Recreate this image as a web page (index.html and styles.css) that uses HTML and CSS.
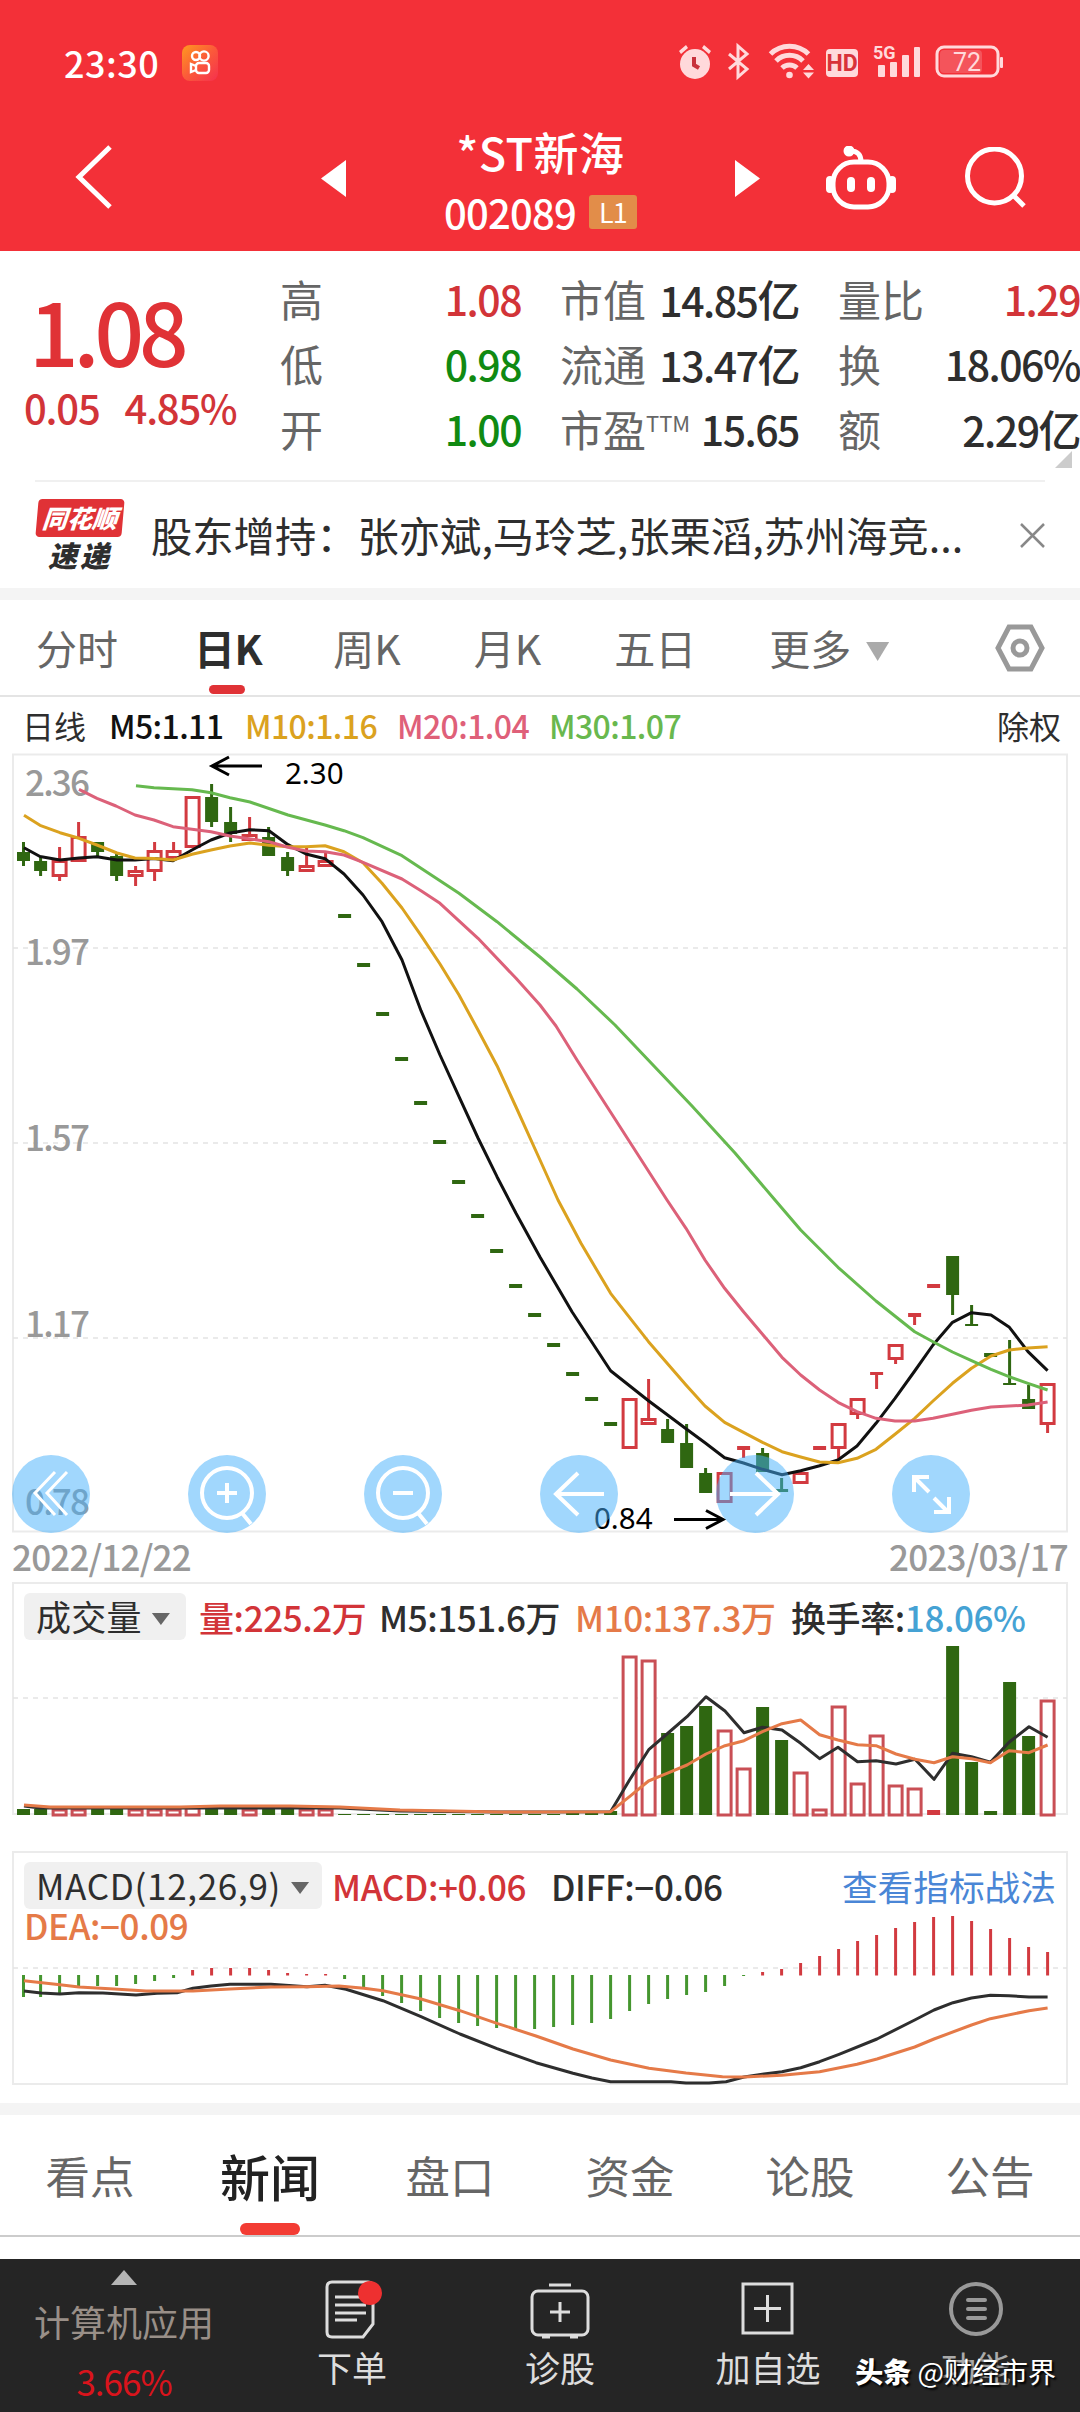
FILE: index.html
```html
<!DOCTYPE html>
<html lang="zh-CN">
<head>
  <meta charset="UTF-8" />
  <meta name="viewport" content="width=device-width, initial-scale=1.0" />
  <title>*ST新海 002089</title>
  <link rel="stylesheet" href="styles.css">
</head>
<body>
  <header class="header">
    <div class="status-bar">
      <span class="clock">23:30</span>
      <svg class="app-icon" width="36" height="36" viewBox="0 0 36 36">
        <defs>
          <linearGradient id="appGradient" x1="0" y1="0" x2="1" y2="1">
            <stop offset="0" stop-color="#ff9a1f" />
            <stop offset="0.5" stop-color="#fb5a3a" />
            <stop offset="1" stop-color="#f5304e" />
          </linearGradient>
        </defs>
        <rect width="36" height="36" rx="8" fill="url(#appGradient)" />
        <g fill="none" stroke="#fff" stroke-width="2.4">
          <circle cx="14" cy="11" r="4" />
          <circle cx="22" cy="11" r="4.6" />
          <rect x="14" y="18" width="13" height="10" rx="3" />
          <path d="M14 21l-5-2v8l5-2" />
        </g>
      </svg>
      <svg class="status-icons" width="330" height="44" viewBox="0 -4 330 44">
        <g fill="#ffd9db">
          <circle cx="17" cy="19" r="15" />
          <path d="M1 6l7-6 2 3-7 6zM33 6l-7-6-2 3 7 6z" />
          <circle cx="111.500" cy="30" r="3.300" />
          <path d="M125 25l5.500-6 5.500 6zM125 27.500l5.500 6 5.500-6z" />
          <rect x="148" y="4" width="32" height="28" rx="4" />
          <rect x="200" y="20" width="7" height="12" rx="1" />
          <rect x="212" y="17" width="7" height="15" rx="1" />
          <rect x="224" y="10" width="7" height="22" rx="1" />
          <rect x="236" y="2" width="6" height="30" rx="1" />
          <rect x="322" y="12" width="3" height="11" rx="1" />
        </g>
        <path d="M16 12v8l5 3" fill="none" stroke="#c8323c" stroke-width="4" />
        <g fill="none" stroke="#ffd9db" stroke-width="3">
          <path d="M51 9l18 15-9 8V1l9 8-18 15" />
          <path d="M92.500 9a27 27 0 0 1 38 0M98 16a19 19 0 0 1 27 0M104 23a11 11 0 0 1 15 0" stroke-width="5" />
          <rect x="259" y="2" width="61" height="29" rx="7" />
        </g>
        <rect x="262" y="5" width="42" height="23" rx="4" fill="#f4545b" />
        <text class="hd" x="164" y="26">HD</text>
        <text class="five-g" x="195" y="14">5G</text>
        <text class="battery" x="289" y="25.500">72</text>
      </svg>
    </div>
    <div class="title-bar">
      <svg class="back" width="38" height="66" viewBox="0 0 38 66"><path d="M35 2L4 32l31 30" /></svg>
      <svg class="prev" width="25" height="37" viewBox="0 0 25 37"><path d="M25 0v37L0 18.500z" /></svg>
      <div class="stock">
        <div class="stock-name">*ST新海</div>
        <div class="stock-code">002089 <span class="level">L1</span></div>
      </div>
      <svg class="next" width="25" height="37" viewBox="0 0 25 37"><path d="M0 0v37L25 18.500z" /></svg>
      <svg class="robot" width="70" height="64" viewBox="0 0 70 64">
        <rect x="7" y="16" width="56" height="45" rx="21" />
        <path d="M24 5c8 0 11 4 11 11" />
        <circle cx="23" cy="5" r="3" />
        <path d="M4 34v9M66 34v9M25 35v7M45 35v7" class="thick" />
      </svg>
      <svg class="search" width="62" height="62" viewBox="0 0 62 62">
        <circle cx="29.500" cy="29" r="27" />
        <path d="M48 48l11 11" />
      </svg>
    </div>
  </header>

  <section class="quote">
    <div class="price">
      <div class="price-now">1.08</div>
      <div class="price-change"><span>0.05</span><span>4.85%</span></div>
    </div>
    <div class="stats">
      <div class="stat"><label>高</label><b class="up">1.08</b></div>
      <div class="stat"><label>市值</label><b>14.85<i>亿</i></b></div>
      <div class="stat"><label>量比</label><b class="up">1.29</b></div>
      <div class="stat"><label>低</label><b class="down">0.98</b></div>
      <div class="stat"><label>流通</label><b>13.47<i>亿</i></b></div>
      <div class="stat"><label>换</label><b>18.06%</b></div>
      <div class="stat"><label>开</label><b class="down">1.00</b></div>
      <div class="stat"><label>市盈<sup>TTM</sup></label><b>15.65</b></div>
      <div class="stat"><label>额</label><b>2.29<i>亿</i></b></div>
    </div>
    <span class="expand"></span>
  </section>

  <section class="flash">
    <div class="flash-logo">
      <span class="logo-top">同花顺</span>
      <span class="logo-bottom">速递</span>
    </div>
    <p class="flash-text">股东增持：<span>张亦斌,马玲芝,张栗滔,苏州海竞...</span></p>
    <svg class="close" width="25" height="25" viewBox="0 0 25 25"><path d="M1 1l23 23M24 1L1 24" /></svg>
  </section>

  <nav class="periods">
    <a>分时</a>
    <a class="active">日K</a>
    <a>周K</a>
    <a>月K</a>
    <a>五日</a>
    <a class="more">更多<i class="caret"></i></a>
    <svg class="settings" width="50" height="48" viewBox="0 0 50 48">
      <path d="M14 3h22l11 21-11 21H14L3 24z" />
      <circle cx="25" cy="24" r="7" />
    </svg>
  </nav>

  <div class="ma-legend">
    <span class="ma-name">日线</span>
    <span class="m5">M5:1.11</span>
    <span class="m10">M10:1.16</span>
    <span class="m20">M20:1.04</span>
    <span class="m30">M30:1.07</span>
    <span class="adjust">除权</span>
  </div>

  <section class="k-chart">
    <svg width="1080" height="784" viewBox="0 752 1080 784">
      <path class="frame" d="M13 754.500H1067V1531.500H13z" />
      <path class="grid" d="M13 948H1067M13 1143H1067M13 1338H1067" />
      <g class="axis">
        <text x="25" y="796">2.36</text>
        <text x="25" y="965">1.97</text>
        <text x="25" y="1151">1.57</text>
        <text x="25" y="1337">1.17</text>
        <text x="25" y="1515">0.78</text>
      </g>
      <g id="candles"></g>
      <polyline class="line m5" points="24,847.700 40,856.500 60,860 79,858 97,856.700 117,860 135,860 154,858.500 173,860.700 192,850 211,840 230,833 250,829.700 269,830.700 288,844.700 306,854 325,858.700 344,874 363,895 382,921.700 402,960 421,1010.700 440,1055 459,1096.700 478,1138 497,1176.700 516,1213.300 540,1257 572,1311.700 610.600,1370.700 648.500,1400.700 686,1428.700 705,1442.700 724.600,1457.700 743.500,1463 762.500,1469.300 782,1474.700 800.700,1470.700 819.600,1465.700 838,1460 857,1446 876,1423.300 895,1398.300 914.700,1371 933,1345 952.500,1322.300 971.500,1312.700 991,1315 1009.400,1327.300 1028,1351.700 1047.600,1370.700" />
      <polyline class="line m10" points="24,815.300 40,825.300 60,832.700 79,838.300 97,845 117,853 135,858 154,858.500 173,860 192,854.300 211,850 230,846 250,843 269,845.300 288,846.700 306,846.700 325,845.700 344,851.700 363,862.700 382,883.300 402,908 421,935.300 440,964 459,995 478,1030 497,1065.700 516,1107 540,1160 558,1200 581,1243.300 610.600,1293.300 648.500,1341.700 686,1385 705,1406 724.600,1422.300 743.500,1432.300 762.500,1442.300 782,1451.700 800.700,1457 819.600,1462 838,1462.700 857,1458.300 876,1449.300 895,1434.300 914.700,1418.300 933,1401 952.500,1383.300 971.500,1368.300 991,1356 1009.400,1350 1028,1348 1047.600,1346.700" />
      <polyline class="line m20" points="79,789.300 97,798.300 116,806 135,815 154,820 173,826.700 211,831.700 230,836 269,841.700 288,847.300 306,851 325,851.700 344,855 363,862.300 402,879 421,890.700 440,903.300 478,938.300 516,978.300 540,1005 556,1026 577,1060 615,1119 667,1200 686,1228.300 705,1260 724.600,1288.300 743.500,1311.700 762.500,1334.300 782,1357.300 800.700,1375 819.600,1390 838,1402.300 857,1411.700 876,1418.300 895,1421 914.700,1421 933,1418.300 952.500,1414.300 971.500,1410.300 991,1407 1009,1406 1028,1405 1047.600,1402" />
      <polyline class="line m30" points="136,785.700 154,787.700 192,789.700 211,792.700 230,797.700 250,802 288,815 325,825 344,830.700 363,837.700 402,855.700 459,893.300 497,921.700 540,957 577,989 615,1025 653,1065 692,1106 735,1153 775,1200 800.700,1230 838,1267.300 876,1301 914.700,1331.700 933,1341.700 952.500,1352 971.500,1360.700 991,1369.300 1009,1376.700 1028,1383.300 1047.600,1390" />
      <g class="mark">
        <path d="M262 766H213M229 757L212 766l17 9" />
        <text x="285" y="784">2.30</text>
        <path d="M674 1519.500h48M706 1510.500l17 9-17 9" />
        <text x="594" y="1529">0.84</text>
      </g>
    </svg>
    <div class="tools">
      <svg viewBox="0 0 78 78"><path d="M43 17L23 38l20 22M55 17L35 38l20 22" class="thin" /></svg>
      <svg viewBox="0 0 78 78"><circle cx="39" cy="38" r="25" /><path d="M39 28v20M29 38h20M54 58l9 11" /></svg>
      <svg viewBox="0 0 78 78"><circle cx="39" cy="38" r="25" /><path d="M29 38h20M54 58l9 11" /></svg>
      <svg viewBox="0 0 78 78"><path d="M64 39H17M38 18L16 39l22 21" /></svg>
      <svg viewBox="0 0 78 78"><path d="M14 39h47M40 18l22 21-22 21" /></svg>
      <svg viewBox="0 0 78 78"><path d="M37 22H22v15M22 22l15 15M42 43l14 14M57 42v15H42" /></svg>
    </div>
  </section>

  <div class="dates"><span>2022/12/22</span><span>2023/03/17</span></div>

  <section class="panel volume">
    <svg width="1080" height="236" viewBox="0 1582 1080 236">
      <path class="frame" d="M13 1583H1067V1814H13z" />
      <path class="grid" d="M13 1698H1067" />
      <g id="volumes"></g>
      <polyline class="line diff" points="24,1806 40,1808 340,1808 400,1811 500,1812 610.600,1811.700 629.500,1780 649,1749.300 667,1734 687,1716.700 706,1696.700 725,1711 744,1732.700 762.500,1727.300 782,1730 800.700,1743.300 819.600,1758.700 838,1747.300 857.500,1761.700 876,1760.700 896,1764 915,1759.300 934,1779.300 952.500,1753.300 971.500,1756.700 990.400,1762.300 1009,1742.300 1029,1726.700 1047.600,1737.300" />
      <polyline class="line dea" points="24,1805 50,1807 180,1807 220,1806 290,1806 340,1807 400,1810 500,1812 610.600,1811.700 629.500,1796.700 648.500,1781 667,1773.300 687,1765 706,1754 725,1745.700 744,1740.700 762.500,1731.700 782,1723.700 800.700,1720 819.600,1734.700 838,1740 857.500,1744.700 876,1745.700 896,1754 915,1759.300 934,1762.700 952.500,1756.700 971.500,1758.700 990.400,1762.700 1009,1750.700 1029,1752.700 1047.600,1745" />
    </svg>
    <div class="legend">
      <span class="chip">成交量<i class="caret"></i></span>
      <span class="up v1">量:225.2万</span>
      <span class="v2">M5:151.6万</span>
      <span class="orange v3">M10:137.3万</span>
      <span class="v4">换手率:<em>18.06%</em></span>
    </div>
  </section>

  <section class="panel macd">
    <svg width="1080" height="236" viewBox="0 1851 1080 236">
      <path class="frame" d="M13 1852H1067V2084H13z" />
      <path class="grid" d="M13 1968H1067" />
      <g id="macdBars"></g>
      <polyline class="line diff" points="24,1991 41,1993 60,1994 79,1992.700 103,1993 136,1995 157,1993.300 177,1992.700 193,1988.300 211,1986 230,1984.300 271,1984.300 307,1986.700 325,1985.300 346,1989.300 383,2000.700 421,2016.700 460,2034 497,2048.700 536,2062.700 573,2073.300 592,2078 610.600,2081.700 671,2081.700 686,2083 709,2083 726,2081.700 744,2077 764,2074 782,2071.700 800.700,2067.700 819.600,2061.700 839,2054.300 877,2039 914.700,2020 934,2010 953,2002.700 971.500,1998 990.400,1995.300 1009,1995.700 1029,1997 1047.600,1997" />
      <polyline class="line dea" points="24,1980.700 60,1984.700 79,1987 114,1989 146,1991 193,1991 230,1989 271,1987 307,1986.700 339,1986 364,1988.300 383,1990.700 421,1999 460,2010.700 497,2023.300 536,2036 573,2049 610.600,2060 649,2068.300 686,2073 722.500,2076.700 744,2077 782,2075.300 819.600,2071.700 857,2064.300 877,2059 914.700,2047 934,2039 971.500,2025 990.400,2018.700 1029,2010.700 1047.600,2008" />
    </svg>
    <div class="legend">
      <span class="chip">MACD(12,26,9)<i class="caret"></i></span>
      <span class="up c1">MACD:+0.06</span>
      <span class="c2">DIFF:−0.06</span>
      <a class="guide">查看指标战法</a>
    </div>
    <div class="dea-value orange">DEA:−0.09</div>
  </section>

  <nav class="sections">
    <a>看点</a>
    <a class="active">新闻</a>
    <a>盘口</a>
    <a>资金</a>
    <a>论股</a>
    <a>公告</a>
  </nav>

  <footer class="bottom-bar">
    <div class="industry">
      <i class="caret-up"></i>
      <span>计算机应用</span>
      <strong>3.66%</strong>
    </div>
    <div class="action">
      <svg width="60" height="60" viewBox="0 0 60 60">
        <path d="M10 2h36q5 0 5 5v37L41 57H10q-5 0-5-5V7q0-5 5-5z" />
        <path d="M13 17h27M13 25h31M13 33h31M13 40h22" />
        <circle cx="48" cy="13" r="12" class="dot" />
      </svg>
      <span>下单</span>
    </div>
    <div class="action">
      <svg width="60" height="60" viewBox="0 0 60 60">
        <path d="M19 5h22" />
        <rect x="2" y="11" width="56" height="44" rx="6" />
        <path d="M30 22v20M20 32h20M12 57h8M40 57h8" />
      </svg>
      <span>诊股</span>
    </div>
    <div class="action">
      <svg width="60" height="60" viewBox="0 0 60 60">
        <rect x="5" y="4" width="49" height="49" />
        <path d="M29.500 15v27M16 28.500h27" />
      </svg>
      <span>加自选</span>
    </div>
    <div class="action menu">
      <svg width="60" height="60" viewBox="0 0 60 60">
        <circle cx="30" cy="29" r="25" />
        <path d="M22 20h17M22 29h17M22 38h17" class="bars" />
      </svg>
      <span>功能</span>
    </div>
    <div class="watermark"><b>头条</b> @财经市界</div>
  </footer>

  <script src="script.js"></script>
</body>
</html>
```

FILE: styles.css
```css
* {
  box-sizing: border-box;
}
body {
  margin: 0;
  width: 1080px;
  height: 2412px;
  overflow: hidden;
  background: #fff;
  color: #2e2e2e;
  font-family: "Noto Sans CJK SC", "Noto Sans", sans-serif;
}
svg {
  display: block;
}
i, em {
  font-style: normal;
}
.up {
  color: #d23438;
}
.down {
  color: #108a12;
}
.orange {
  color: #e57a48;
}

/* Header */
.header {
  height: 251px;
  background: #f33038;
  color: #fff;
}
.status-bar {
  display: flex;
  align-items: center;
  height: 126px;
  padding: 0 74px 0 64px;
}
.clock {
  font-size: 36px;
  font-weight: 500;
  letter-spacing: 0.5px;
  width: 118px;
  margin-top: -3px;
}
.status-icons {
  margin-left: auto;
  margin-right: -2px;
}
.hd {
  font: bold 23px Roboto, sans-serif;
  fill: #d8323a;
  text-anchor: middle;
}
.five-g {
  font: bold 18px Roboto, sans-serif;
  fill: #ffd9db;
}
.battery {
  font: 25px Roboto, sans-serif;
  fill: #ffd9db;
  text-anchor: middle;
}
.title-bar {
  display: flex;
  align-items: center;
  height: 104px;
  padding-left: 75px;
}
.back, .search, .robot {
  fill: none;
  stroke: #fff;
  stroke-width: 5;
  flex: none;
}
.robot .thick {
  stroke-width: 8;
  stroke-linecap: round;
}
.robot circle {
  fill: #fff;
}
.prev, .next {
  fill: #fff;
  flex: none;
}
.prev {
  margin-left: 208px;
}
.stock {
  width: 389px;
  padding-top: 5px;
  text-align: center;
}
.stock-name {
  font-size: 45px;
  font-weight: 500;
  line-height: 56px;
  letter-spacing: 0.5px;
}
.stock-code {
  display: flex;
  justify-content: center;
  align-items: center;
  gap: 13px;
  font-size: 40px;
  font-weight: 500;
  line-height: 50px;
  padding-top: 7px;
  letter-spacing: -0.8px;
}
.level {
  width: 48px;
  height: 34px;
  border-radius: 3px;
  background: #e28d49;
  font-size: 27px;
  font-weight: 400;
  line-height: 33px;
}
.robot {
  margin-left: 66px;
}
.search {
  margin-left: 69px;
}

/* Quote */
.quote {
  position: relative;
  display: flex;
  height: 229px;
  padding-top: 14px;
}
.price {
  width: 280px;
  padding-left: 24px;
}
.price-now {
  font-size: 87px;
  font-weight: 500;
  line-height: 100px;
  margin-top: 14px;
  padding-left: 5px;
  letter-spacing: -5px;
  color: #e03236;
}
.price-change {
  display: flex;
  gap: 25px;
  font-size: 40px;
  font-weight: 500;
  line-height: 44px;
  margin-top: 6px;
  letter-spacing: -1.2px;
  color: #d23438;
}
.stats {
  display: grid;
  grid-template-columns: 241px 239px 242px;
  grid-auto-rows: 65px;
  column-gap: 39px;
}
.stat {
  display: flex;
  justify-content: space-between;
  align-items: center;
  white-space: nowrap;
}
.stat label {
  font-size: 43px;
  color: #666;
}
.stat sup {
  font-size: 22px;
  line-height: 0;
}
.stat b {
  font-size: 41px;
  font-weight: 500;
  letter-spacing: -1.5px;
}
.stat i {
  font-size: 43px;
}
.expand {
  position: absolute;
  right: 8px;
  bottom: 12px;
  width: 17px;
  height: 17px;
  background: #ccc;
  clip-path: polygon(100% 0, 100% 100%, 0 100%);
}

/* News flash */
.flash {
  display: flex;
  align-items: center;
  height: 108px;
  margin: 0 35px;
  border-top: 2px solid #f0f0f0;
}
.flash-logo {
  width: 90px;
  text-align: center;
  font-style: italic;
  font-weight: 900;
  line-height: 1;
}
.logo-top {
  display: block;
  height: 38px;
  margin: 0 2px;
  line-height: 36px;
  font-size: 25px;
  border-radius: 4px;
  background: #e03236;
  color: #fff;
  transform: skewX(-5deg);
}
.logo-bottom {
  display: block;
  font-size: 29px;
  line-height: 34px;
  letter-spacing: 3px;
}
.flash-text {
  margin: -3px 0 0 26px;
  font-size: 41.3px;
  line-height: 60px;
  white-space: nowrap;
}
.close {
  margin-left: auto;
  stroke: #888;
  stroke-width: 2.5;
}

/* Period tabs */
.periods {
  display: flex;
  align-items: center;
  height: 109px;
  padding: 0 35px 0 36px;
  border-top: 12px solid #f4f4f4;
  border-bottom: 2px solid #e4e4e4;
  font-size: 41px;
  color: #666;
}
.periods a {
  position: relative;
  margin-right: 73px;
  line-height: 93px;
}
.periods .active {
  margin-left: 3px;
  margin-right: 71px;
  font-weight: 700;
  letter-spacing: -0.5px;
  color: #2e2e2e;
}
.periods .active::after,
.sections .active::after {
  content: "";
  position: absolute;
  left: 50%;
  bottom: 0;
  width: 36px;
  height: 9px;
  margin-left: -19px;
  border-radius: 5px;
  background: #e03236;
}
.caret {
  display: inline-block;
  width: 18px;
  height: 12px;
  margin-left: 9px;
  background: #666;
  clip-path: polygon(0 0, 100% 0, 50% 100%);
}
.more .caret {
  width: 23px;
  height: 19px;
  margin-left: 15px;
  margin-bottom: 4px;
  background: #aaa;
}
.settings {
  margin-left: auto;
  fill: none;
  stroke: #999;
  stroke-width: 5;
}
.periods .more {
  margin-right: 0;
}

/* Moving average row */
.ma-legend {
  display: flex;
  align-items: center;
  height: 55px;
  padding: 0 19px 0 22px;
  font-size: 32px;
  line-height: 50px;
  white-space: nowrap;
}
.ma-legend span {
  font-weight: 500;
  letter-spacing: -0.6px;
}
.ma-legend .ma-name, .ma-legend .adjust {
  font-weight: 400;
  letter-spacing: 0;
}
.ma-name { width: 87px; }
.ma-legend .m5 { width: 136px; color: #111; }
.ma-legend .m10 { width: 152px; color: #dba21f; }
.ma-legend .m20 { width: 152px; color: #df6079; }
.ma-legend .m30 { color: #69b84e; }
.adjust {
  margin-left: auto;
}

/* Candles */
.k-chart {
  position: relative;
}
.frame {
  fill: none;
  stroke: #ebebeb;
  stroke-width: 2;
}
.grid {
  stroke: #e3e3e3;
  stroke-width: 1.5;
  stroke-dasharray: 5 5;
}
.axis text {
  font-size: 35px;
  font-weight: 500;
  letter-spacing: -1.8px;
  fill: #999;
}
.line {
  fill: none;
  stroke-width: 3;
  stroke-linejoin: round;
}
.line.m5 { stroke: #111; }
.line.m10 { stroke: #dba21f; }
.line.m20 { stroke: #dc6179; }
.line.m30 { stroke: #66b94f; }
.line.diff { stroke: #2e2e2e; }
.line.dea { stroke: #e57a48; }
.mark path {
  fill: none;
  stroke: #000;
  stroke-width: 3;
}
.mark text {
  font: 29.5px "Noto Sans", sans-serif;
}
.green-fill { fill: #2f6711; }
.red-fill { fill: #d23a40; }
.macd-green { fill: #45962f; }
.red-box {
  fill: #fff;
  stroke: #d23a40;
  stroke-width: 3;
}
.volume-box {
  stroke: #c94f55;
}
.tools {
  position: absolute;
  left: 12px;
  bottom: 3px;
  display: flex;
  gap: 98px;
}
.tools svg {
  width: 78px;
  height: 78px;
  border-radius: 50%;
  background: rgba(68, 176, 252, 0.5);
  fill: none;
  stroke: #fff;
  stroke-width: 4;
}
.tools .thin {
  stroke-width: 3;
}
.dates {
  display: flex;
  justify-content: space-between;
  height: 46px;
  padding: 0 12px;
  font-size: 35px;
  font-weight: 500;
  line-height: 39px;
  letter-spacing: -0.8px;
  color: #999;
}

/* Volume and MACD */
.panel {
  position: relative;
  height: 269px;
  padding: 11px 24px 0;
  font-size: 35px;
}
.panel > svg {
  position: absolute;
  left: 0;
  top: 0;
}
.legend {
  position: relative;
  display: flex;
  align-items: center;
  height: 47px;
  font-weight: 500;
  letter-spacing: -0.4px;
  line-height: 46px;
  white-space: nowrap;
}
.chip {
  width: 162px;
  height: 47px;
  padding-left: 12px;
  border-radius: 6px;
  background: #f0f0f0;
  font-weight: 400;
  letter-spacing: 0.3px;
}
.chip .caret {
  margin-left: 10px;
  margin-bottom: 6px;
}
.v1 { width: 180px; margin-left: 13px; }
.v2 { width: 196px; }
.v3 { width: 216px; }
.v4 em { color: #45a2d4; }
.macd {
  height: 252px;
}
.macd .chip {
  width: 298px;
  letter-spacing: 0.7px;
}
.c1 { width: 219px; margin-left: 10px; }
.guide {
  margin-left: auto;
  font-size: 35.7px;
  font-weight: 400;
  letter-spacing: 0;
  color: #4a86d6;
}
.dea-value {
  position: relative;
  font-weight: 500;
  letter-spacing: -0.4px;
  line-height: 38px;
  margin-top: -3px;
}

/* Section tabs */
.sections {
  display: flex;
  height: 134px;
  border-top: 12px solid #f4f4f4;
  border-bottom: 2px solid #ccc;
  font-size: 44.5px;
  color: #666;
}
.sections a {
  position: relative;
  flex: 1;
  line-height: 120px;
  text-align: center;
}
.sections .active {
  font-size: 50px;
  font-weight: 500;
  color: #222;
}
.sections .active::after {
  width: 60px;
  height: 12px;
  margin-left: -30px;
  border-radius: 6px;
  background: #f33c34;
}

/* Bottom bar */
.bottom-bar {
  position: relative;
  display: flex;
  height: 153px;
  margin-top: 22px;
  background: #252525;
  color: #ddd;
  font-size: 35px;
}
.industry {
  display: flex;
  flex-direction: column;
  align-items: center;
  width: 248px;
  padding-top: 11px;
  color: #998f88;
}
.caret-up {
  width: 26px;
  height: 15px;
  background: #b5b5b5;
  clip-path: polygon(50% 0, 100% 100%, 0 100%);
}
.industry span {
  font-size: 36px;
  line-height: 50px;
  margin-top: 11px;
}
.industry strong {
  font-weight: 400;
  line-height: 44px;
  margin-top: 13px;
  letter-spacing: -1px;
  color: #d9141c;
}
.action {
  display: flex;
  flex-direction: column;
  align-items: center;
  width: 208px;
  padding-top: 21px;
}
.action svg {
  fill: none;
  stroke: #ddd;
  stroke-width: 3;
}
.action .dot {
  fill: #ee3030;
  stroke: none;
}
.action span {
  line-height: 50px;
  margin-top: 2px;
}
.menu svg {
  stroke: #999;
  stroke-width: 4;
}
.menu .bars {
  stroke-width: 4;
  stroke-linecap: round;
}
.menu span {
  color: #aaa;
}
.watermark {
  position: absolute;
  right: 24px;
  top: 87px;
  font-size: 28px;
  line-height: 50px;
  color: #fff;
  text-shadow: 2px 2px 2px #000;
  white-space: nowrap;
}
.watermark b {
  font-weight: 900;
}
```

FILE: script.js
```js
var SVG = 'http://www.w3.org/2000/svg';

// Centre of the n-th trading day
function dayX(n) {
  return n === 0 ? 23.5 : 21.6 + n * 19;
}

function rect(parent, cls, x, y, w, h) {
  var el = document.createElementNS(SVG, 'rect');
  el.setAttribute('class', cls);
  el.setAttribute('x', x);
  el.setAttribute('y', y);
  el.setAttribute('width', w);
  el.setAttribute('height', h);
  parent.appendChild(el);
}

// [colour, body top, body bottom, wick top, wick bottom]
var candles = [
  ['g', 852, 861, 842, 866], ['g', 861, 871, 857, 876], ['r', 860, 877, 847, 881],
  ['r', 836, 862, 822, 862], ['g', 842, 852, 842, 856], ['g', 856, 876, 852, 881],
  ['r', 870, 877, 866, 886], ['r', 850, 872, 842, 881], ['r', 850, 859, 842, 859],
  ['r', 796, 848, 796, 848], ['g', 797, 822, 784, 827], ['g', 822, 834, 807, 842],
  ['r', 834, 841, 817, 841], ['g', 837, 856, 827, 856], ['g', 857, 871, 852, 876],
  ['r', 865, 872, 848, 872], ['r', 860, 867, 852, 867],
  ['g', 914, 918], ['g', 963, 967], ['g', 1012, 1016], ['g', 1057, 1061],
  ['g', 1101, 1105], ['g', 1140, 1144], ['g', 1180, 1184], ['g', 1214, 1218],
  ['g', 1249, 1253], ['g', 1284, 1288], ['g', 1313, 1317], ['g', 1343, 1347],
  ['g', 1372, 1376], ['g', 1397, 1401], ['g', 1422, 1426],
  ['r', 1398, 1449, 1398, 1449], ['r', 1418, 1425, 1379, 1425], ['g', 1429, 1443, 1419, 1443],
  ['g', 1443, 1468, 1424, 1468], ['g', 1473, 1493, 1468, 1493], ['r', 1472, 1503, 1472, 1503],
  ['r', 1446, 1450, 1446, 1458], ['g', 1453, 1472, 1448, 1472], ['g', 1489, 1492, 1478, 1492],
  ['r', 1472, 1484, 1472, 1484], ['r', 1446, 1450], ['r', 1423, 1449, 1423, 1460],
  ['r', 1398, 1415, 1398, 1419], ['r', 1372, 1375, 1372, 1389], ['r', 1344, 1360, 1344, 1364],
  ['r', 1313, 1317, 1313, 1325], ['r', 1284, 1288], ['g', 1256, 1295, 1256, 1315],
  ['g', 1324, 1326, 1305, 1326], ['g', 1353, 1357], ['g', 1383, 1385, 1340, 1385],
  ['g', 1399, 1409, 1385, 1409], ['r', 1383, 1425, 1383, 1433]
];

var volumeTops = [
  1809, 1809, 1809, 1809, 1809, 1809, 1809, 1809, 1809, 1807, 1809, 1809, 1809, 1809, 1809, 1809, 1809,
  1814, 1814, 1814, 1814, 1814, 1814, 1814, 1814, 1814, 1814, 1814, 1814, 1813, 1812, 1811,
  1656, 1660, 1733, 1726, 1706, 1730, 1768, 1707, 1740, 1772, 1809, 1706, 1783, 1735, 1785, 1788,
  1810, 1646, 1762, 1811, 1682, 1736, 1700
];

var macdEnds = [
  1997, 1997, 1993, 1987, 1986, 1986, 1984, 1981, 1978, 1970, 1968, 1968, 1968, 1970, 1973, 1974, 1974,
  1979, 1987, 1996, 2003, 2011, 2018, 2023, 2026, 2028, 2029, 2029, 2027, 2025, 2023, 2019, 2011, 2004,
  1999, 1995, 1992, 1986, 1976, 1972, 1969, 1963, 1956, 1949, 1941, 1935, 1928, 1922, 1917, 1916, 1921,
  1929, 1938, 1947, 1952
];

var candleGroup = document.getElementById('candles');
var volumeGroup = document.getElementById('volumes');
var macdGroup = document.getElementById('macdBars');

candles.forEach(function (c, i) {
  var x = dayX(i);
  var fill = c[0] === 'g' ? 'green-fill' : 'red-fill';
  if (c.length > 3) {
    rect(candleGroup, fill, x - 1.5, c[3], 3, c[4] - c[3]);
  }
  if (c[0] === 'r' && c[2] - c[1] > 5) {
    rect(candleGroup, 'red-box', x - 6.5, c[1] + 1.5, 13, c[2] - c[1] - 3);
  } else {
    rect(candleGroup, fill, x - 6.5, c[1], 13, c[2] - c[1]);
  }

  var top = volumeTops[i];
  if (c[0] === 'r' && 1815 - top > 5) {
    rect(volumeGroup, 'red-box volume-box', x - 6.5, top + 1, 13, 1814 - top);
  } else {
    rect(volumeGroup, fill, x - 6.5, top, 13, 1815 - top);
  }

  var end = macdEnds[i];
  if (end > 1975) {
    rect(macdGroup, 'macd-green', x - 1.5, 1975, 3, end - 1975);
  } else {
    rect(macdGroup, 'red-fill', x - 1.5, end, 3, 1975.5 - end);
  }
});
```
